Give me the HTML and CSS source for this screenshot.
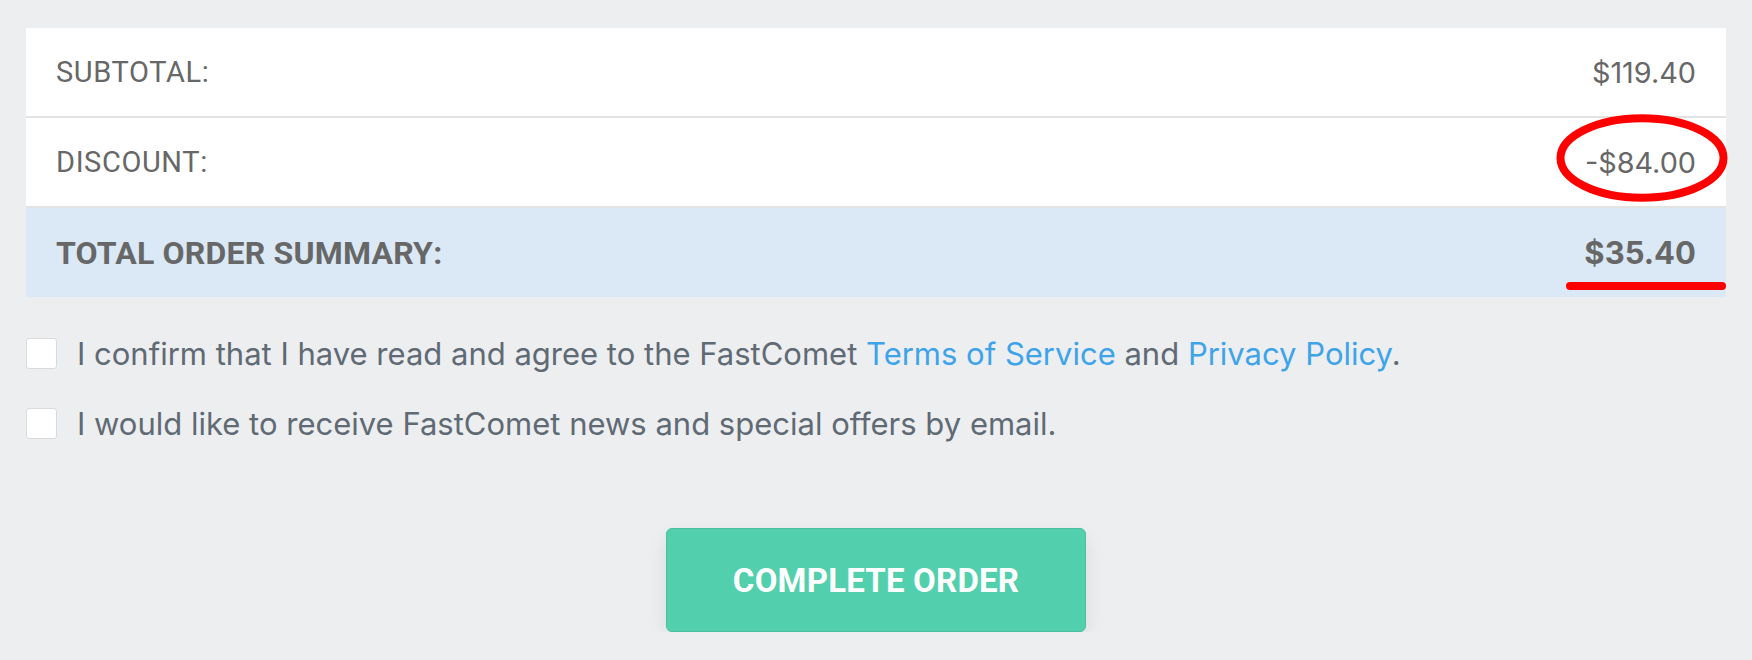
FILE: index.html
```html
<!DOCTYPE html>
<html lang="en">
<head>
<meta charset="utf-8">
<title>Order summary</title>
<link rel="stylesheet" href="styles.css">
</head>
<body>
<main class="page">
  <section class="summary">
    <div class="row">
      <span class="label">SUBTOTAL:</span>
      <span class="amount">$119.40</span>
    </div>
    <div class="row">
      <span class="label">DISCOUNT:</span>
      <span class="amount">-$84.00</span>
      <svg class="mark-circle" viewBox="0 0 172 88" aria-hidden="true">
        <ellipse cx="86" cy="44" rx="81.5" ry="39.8" fill="none" stroke="#ff0000" stroke-width="8"/>
      </svg>
    </div>
    <div class="row total">
      <span class="label">TOTAL ORDER SUMMARY:</span>
      <span class="amount">$35.40</span>
      <span class="mark-line"></span>
    </div>
  </section>

  <div class="agreements">
    <label class="check">
      <span class="box"></span>
      <span class="check-text">I confirm that I have read and agree to the FastComet <a href="#">Terms of Service</a> and <a href="#">Privacy Policy</a>.</span>
    </label>
    <label class="check">
      <span class="box"></span>
      <span class="check-text">I would like to receive FastComet news and special offers by email.</span>
    </label>
  </div>

  <div class="actions">
    <button class="complete" type="button">COMPLETE ORDER</button>
  </div>
</main>
</body>
</html>
```

FILE: styles.css
```css
html, body {
  margin: 0;
  padding: 0;
}

body {
  background: #edeef0;
  font-family: Roboto, "Liberation Sans", sans-serif;
}

.page {
  padding: 28px 26px 0;
}

.summary {
  display: flex;
  flex-direction: column;
}

.row {
  position: relative;
  display: flex;
  align-items: center;
  justify-content: space-between;
  height: 88px;
  padding: 0 30px;
  background: #ffffff;
  border-bottom: 2px solid #e3e3e3;
}

.row.total {
  height: 89px;
  background: #dae9f5;
  border-bottom: none;
}

.label {
  font-family: Roboto, "Liberation Sans", sans-serif;
  font-size: 29px;
  color: #676767;
  letter-spacing: 0.6px;
}

.amount {
  font-family: Inter, "Liberation Sans", sans-serif;
  font-size: 28.8px;
  color: #676767;
}

.total .label {
  font-weight: 700;
  font-size: 32px;
  letter-spacing: 0.2px;
}

.total .amount {
  font-weight: 700;
  font-size: 31px;
}

.mark-circle {
  position: absolute;
  right: -2px;
  top: -4px;
  width: 172px;
  height: 88px;
  overflow: visible;
}

.mark-line {
  position: absolute;
  right: 0;
  top: 74px;
  width: 160px;
  height: 8px;
  border-radius: 4px;
  background: #ff0000;
}

.agreements {
  display: flex;
  flex-direction: column;
  gap: 39px;
  margin-top: 41px;
}

.check {
  display: flex;
  align-items: center;
  gap: 20px;
  height: 31px;
}

.box {
  flex: none;
  width: 29px;
  height: 29px;
  background: #ffffff;
  border: 1px solid #d9dadc;
  border-radius: 3px;
}

.check-text {
  font-family: Inter, "Liberation Sans", sans-serif;
  font-size: 31px;
  line-height: 31px;
  color: #5f6a74;
}

.check-text a {
  color: #3ea4ea;
  text-decoration: none;
}

.actions {
  display: flex;
  justify-content: center;
  margin-top: 89px;
}

.complete {
  width: 420px;
  height: 104px;
  background: #52cfad;
  border: 1px solid #49c09e;
  border-radius: 6px;
  box-shadow: 0 8px 20px rgba(0, 0, 0, 0.08);
  color: #ffffff;
  font-family: Roboto, "Liberation Sans", sans-serif;
  font-weight: 700;
  font-size: 33px;
  letter-spacing: 0.2px;
  padding: 0;
}
```
